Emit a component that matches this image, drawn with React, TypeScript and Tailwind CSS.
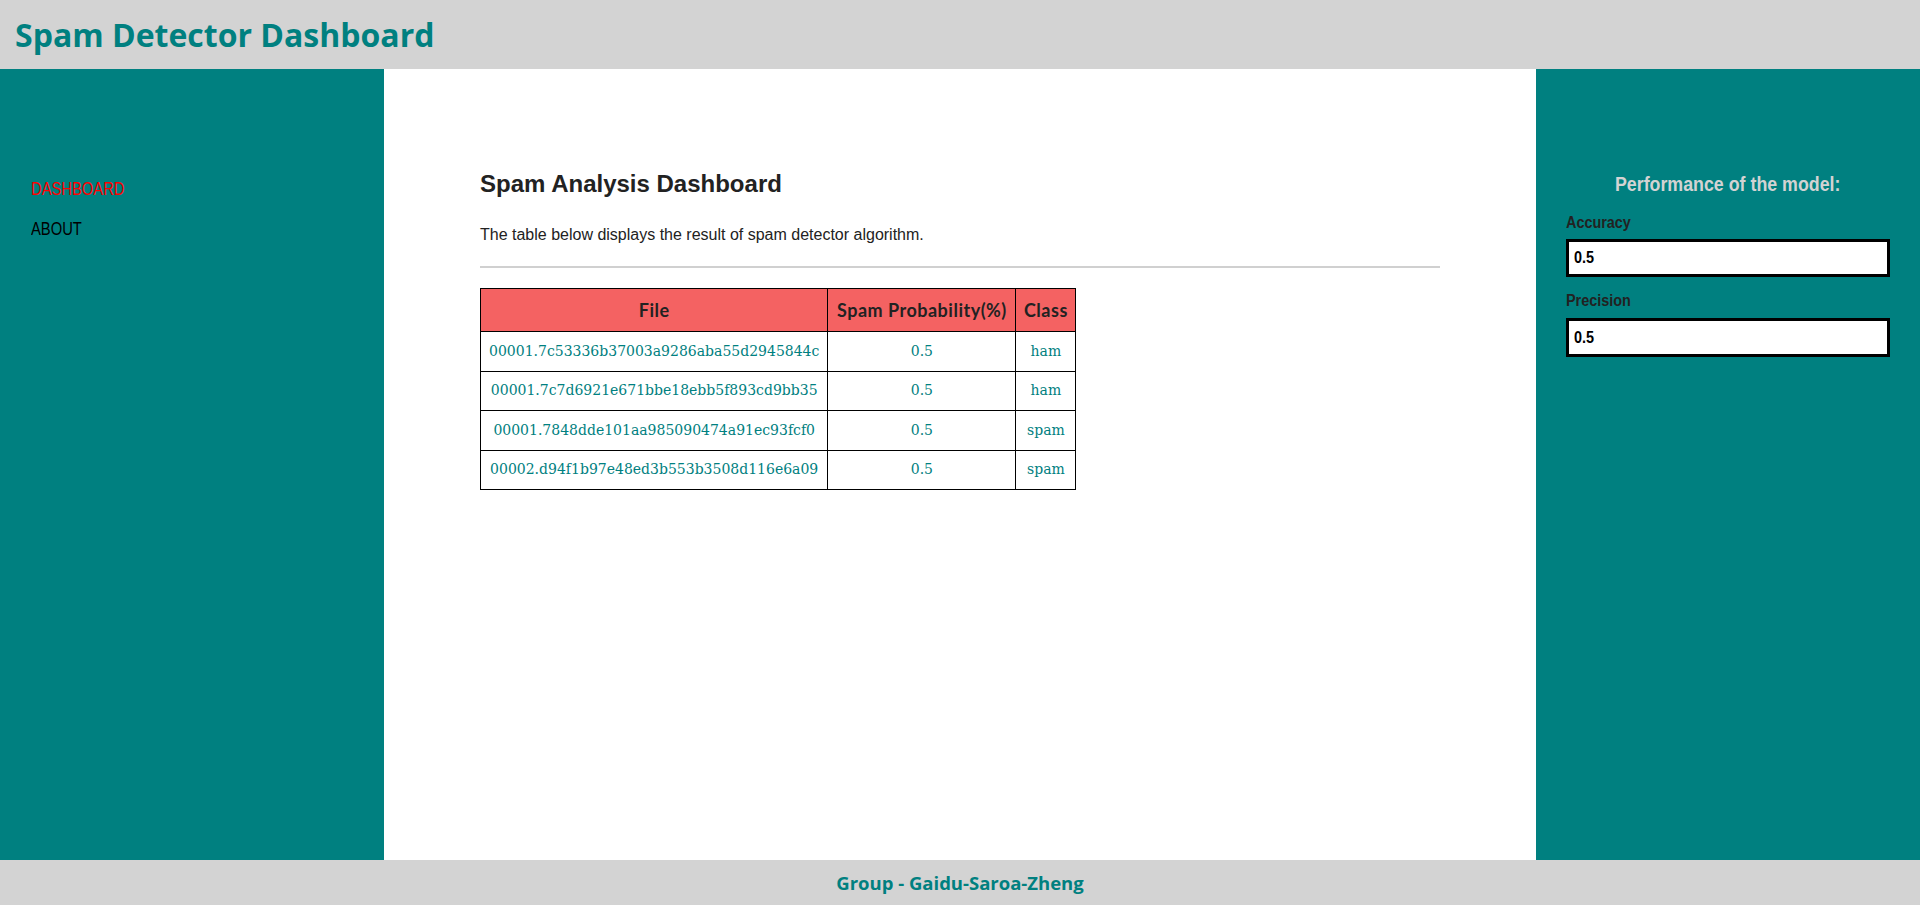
import React from 'react';

const rows = [
  { file: '00001.7c53336b37003a9286aba55d2945844c', prob: '0.5', cls: 'ham' },
  { file: '00001.7c7d6921e671bbe18ebb5f893cd9bb35', prob: '0.5', cls: 'ham' },
  { file: '00001.7848dde101aa985090474a91ec93fcf0', prob: '0.5', cls: 'spam' },
  { file: '00002.d94f1b97e48ed3b553b3508d116e6a09', prob: '0.5', cls: 'spam' },
];

// the original uses a narrow Arial; squeeze Liberation Sans to match
const Narrow = ({ children, wide }: { children: React.ReactNode; wide?: boolean }) => (
  <span className={`inline-block whitespace-nowrap origin-left ${wide ? 'scale-x-[0.9]' : 'scale-x-[0.82]'}`}>
    {children}
  </span>
);

const App = () => {
  return (
    <div className="flex h-[905px] w-full flex-col font-['Liberation_Sans',Arial,sans-serif]">
      {/* header */}
      <header className="flex h-[69px] shrink-0 items-center bg-[#d3d3d3] px-[15px]">
        <h1 className="font-['Open_Sans',sans-serif] text-[32px] font-bold leading-none text-[#008080]">
          Spam Detector Dashboard
        </h1>
      </header>

      <div className="flex min-h-0 flex-1">
        {/* left nav */}
        <nav className="w-[384px] shrink-0 bg-[#008080] pl-[31px] pt-[110px]">
          <ul className="flex flex-col gap-[20px] text-[18px] leading-[20px]">
            <li className="text-[#ff0000]"><Narrow>DASHBOARD</Narrow></li>
            <li className="text-black"><Narrow>ABOUT</Narrow></li>
          </ul>
        </nav>

        {/* main */}
        <main className="flex-1 bg-white px-[96px] pt-[101px] text-[#222]">
          <h2 className="text-[24px] font-bold leading-[28px]">Spam Analysis Dashboard</h2>
          <p className="mt-[28px] text-[16px] leading-[18px]">
            The table below displays the result of spam detector algorithm.
          </p>
          <div className="mt-[22px] h-[2px] bg-[#d0d0d0]" />

          <table className="mt-[20px] table-fixed border-collapse">
            <thead>
              <tr className="h-[43px] bg-[#f46262] font-['Lato',sans-serif] text-[18px] font-bold tracking-[0.5px] text-[#222]">
                <th className="w-[347px] border border-black px-2">File</th>
                <th className="w-[188px] whitespace-nowrap border border-black px-1">Spam Probability(%)</th>
                <th className="w-[60px] border border-black px-1">Class</th>
              </tr>
            </thead>
            <tbody className="font-['DejaVu_Serif',serif] text-[14px] text-[#008080]">
              {rows.map((r) => (
                <tr key={r.file} className="h-[39.5px]">
                  <td className="whitespace-nowrap border border-black px-2 text-center">{r.file}</td>
                  <td className="border border-black px-2 text-center">{r.prob}</td>
                  <td className="border border-black px-2 text-center">{r.cls}</td>
                </tr>
              ))}
            </tbody>
          </table>
        </main>

        {/* right panel */}
        <aside className="w-[384px] shrink-0 bg-[#008080] px-[30px] pt-[103px]">
          <h3 className="text-center text-[20px] font-bold leading-[24px] text-[#d3d3d3]">
            <span className="inline-block scale-x-[0.89] whitespace-nowrap">Performance of the model:</span>
          </h3>
          <label className="mt-[18px] block text-[16px] font-bold leading-[18px] text-[#222]">
            <Narrow wide>Accuracy</Narrow>
          </label>
          <div className="mt-[7px] flex h-[38px] items-center border-[3px] border-black bg-white px-[5px] text-[16px] font-bold text-black">
            <Narrow wide>0.5</Narrow>
          </div>
          <label className="mt-[15px] block text-[16px] font-bold leading-[18px] text-[#222]">
            <Narrow wide>Precision</Narrow>
          </label>
          <div className="mt-[8px] flex h-[39px] items-center border-[3px] border-black bg-white px-[5px] text-[16px] font-bold text-black">
            <Narrow wide>0.5</Narrow>
          </div>
        </aside>
      </div>

      {/* footer */}
      <footer className="flex h-[45px] shrink-0 items-center justify-center bg-[#d3d3d3]">
        <span className="font-['Open_Sans',sans-serif] text-[18.5px] font-bold text-[#008080]">
          Group - Gaidu-Saroa-Zheng
        </span>
      </footer>
    </div>
  );
};

export default App;
